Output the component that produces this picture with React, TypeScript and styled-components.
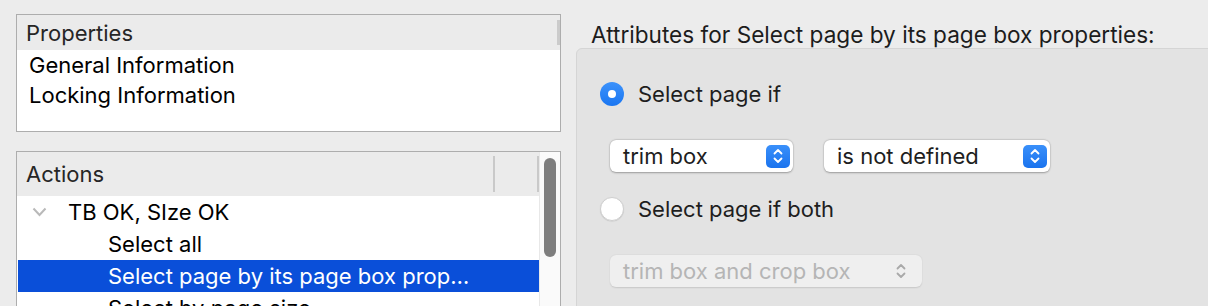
import React from "react";
import styled, { createGlobalStyle } from "styled-components";

const GlobalStyle = createGlobalStyle`
  html, body {
    margin: 0;
    padding: 0;
    background: #ececec;
  }
  body {
    font-family: Inter, "Liberation Sans", sans-serif;
    -webkit-font-smoothing: antialiased;
  }
`;

type Row = { label: string; level: number; expandable?: boolean; selected?: boolean };

const actionRows: Row[] = [
  { label: "TB OK, SIze OK", level: 0, expandable: true },
  { label: "Select all", level: 1 },
  { label: "Select page by its page box prop…", level: 1, selected: true },
  { label: "Select by page size", level: 1 },
];

const Chevron = () => (
  <svg width="15" height="10" viewBox="0 0 15 10">
    <polyline points="1.5,1.5 7.5,8 13.5,1.5" fill="none" stroke="#b9b9b9" strokeWidth="2" />
  </svg>
);

const StepperArrows = ({ color }: { color: string }) => (
  <svg width="10" height="16" viewBox="0 0 10 16">
    <polyline points="1.5,5.5 5,2 8.5,5.5" fill="none" stroke={color} strokeWidth="1.8" strokeLinecap="round" strokeLinejoin="round" />
    <polyline points="1.5,10.5 5,14 8.5,10.5" fill="none" stroke={color} strokeWidth="1.8" strokeLinecap="round" strokeLinejoin="round" />
  </svg>
);

const App: React.FC = () => {
  return (
    <Page>
      <GlobalStyle />
      <LeftColumn>
        <Table $height={118}>
          <Main>
            <Header $height={35}>
              <HeaderCell $width={520}>Properties</HeaderCell>
              <HeaderGrip />
            </Header>
            <PropRow>General Information</PropRow>
            <PropRow>Locking Information</PropRow>
          </Main>
        </Table>
        <Table $height={160}>
          <Main>
            <Header $height={44}>
              <HeaderCell $width={476}>Actions</HeaderCell>
              <Divider />
              <HeaderCell $width={42} />
              <Divider />
            </Header>
            {actionRows.map((row) => (
              <ActionRow key={row.label} $selected={row.selected}>
                <Disclosure>{row.expandable && <Chevron />}</Disclosure>
                <RowLabel $indent={row.level * 40}>{row.label}</RowLabel>
              </ActionRow>
            ))}
          </Main>
          <ScrollTrack>
            <ScrollThumb />
          </ScrollTrack>
        </Table>
      </LeftColumn>

      <RightColumn>
        <Title>Attributes for Select page by its page box properties:</Title>
        <Panel>
          <RadioRow>
            <Radio $checked />
            <RadioLabel>Select page if</RadioLabel>
          </RadioRow>
          <PopupRow>
            <Popup $width={183}>
              <PopupText>trim box</PopupText>
              <Stepper>
                <StepperArrows color="#ffffff" />
              </Stepper>
            </Popup>
            <Popup $width={226}>
              <PopupText>is not defined</PopupText>
              <Stepper>
                <StepperArrows color="#ffffff" />
              </Stepper>
            </Popup>
          </PopupRow>
          <RadioRow>
            <Radio />
            <RadioLabel>Select page if both</RadioLabel>
          </RadioRow>
          <PopupRow>
            <Popup $width={312} $disabled>
              <PopupText>trim box and crop box</PopupText>
              <PlainArrows>
                <StepperArrows color="#a9a9a9" />
              </PlainArrows>
            </Popup>
          </PopupRow>
        </Panel>
      </RightColumn>
    </Page>
  );
};

const Page = styled.div`
  width: 1208px;
  height: 306px;
  overflow: hidden;
  display: flex;
  background: #ececec;
`;

const LeftColumn = styled.div`
  width: 545px;
  margin-left: 16px;
  padding-top: 14px;
  display: flex;
  flex-direction: column;
  gap: 19px;
  flex-shrink: 0;
`;

const Table = styled.div<{ $height: number }>`
  height: ${(p) => p.$height}px;
  flex-shrink: 0;
  box-sizing: border-box;
  border: 1px solid #adadad;
  background: #ffffff;
  display: flex;
  overflow: hidden;
`;

const Main = styled.div`
  flex: 1;
  display: flex;
  flex-direction: column;
`;

const Header = styled.div<{ $height: number }>`
  height: ${(p) => p.$height}px;
  flex-shrink: 0;
  background: #ebebeb;
  display: flex;
  align-items: center;
`;

const HeaderCell = styled.div<{ $width: number }>`
  width: ${(p) => p.$width}px;
  padding-left: 9px;
  box-sizing: border-box;
  font-size: 22px;
  color: #262626;
`;

const HeaderGrip = styled.div`
  width: 3px;
  height: 25px;
  margin-left: auto;
  background: #cbcbcb;
`;

const Divider = styled.div`
  width: 2px;
  height: 36px;
  background: #c9c9c9;
`;

const PropRow = styled.div`
  height: 30px;
  display: flex;
  align-items: center;
  padding-left: 12px;
  font-size: 22px;
  color: #000000;
`;

const ActionRow = styled.div<{ $selected?: boolean }>`
  height: 32px;
  flex-shrink: 0;
  display: flex;
  align-items: center;
  margin-left: 1px;
  background: ${(p) => (p.$selected ? "#0a4fd9" : "transparent")};
  color: ${(p) => (p.$selected ? "#ffffff" : "#000000")};
  font-size: 22px;
  white-space: nowrap;
`;

const Disclosure = styled.div`
  width: 50px;
  padding-left: 14px;
  box-sizing: border-box;
  display: flex;
  align-items: center;
  height: 100%;
`;

const RowLabel = styled.span<{ $indent: number }>`
  padding-left: ${(p) => p.$indent}px;
`;

const ScrollTrack = styled.div`
  width: 21px;
  flex-shrink: 0;
  background: #fafafa;
  border-left: 1px solid #e8e8e8;
  display: flex;
  justify-content: center;
  padding-top: 6px;
  box-sizing: border-box;
`;

const ScrollThumb = styled.div`
  width: 12px;
  height: 99px;
  border-radius: 6px;
  background: #7e7e7e;
`;

const RightColumn = styled.div`
  margin-left: 15px;
  flex: 1;
  display: flex;
  flex-direction: column;
`;

const Title = styled.div`
  height: 48px;
  padding: 22px 0 0 15px;
  box-sizing: border-box;
  font-size: 22.6px;
  line-height: 26px;
  color: #1c1c1c;
  white-space: nowrap;
`;

const Panel = styled.div`
  flex: 1;
  margin-right: -10px;
  background: #e3e3e3;
  border: 1px solid #d5d5d5;
  border-radius: 6px 0 0 0;
  padding: 33px 0 0 23px;
  display: flex;
  flex-direction: column;
`;

const RadioRow = styled.div`
  height: 24px;
  display: flex;
  align-items: center;
  gap: 14px;
`;

const Radio = styled.div<{ $checked?: boolean }>`
  width: 24px;
  height: 24px;
  border-radius: 50%;
  box-sizing: border-box;
  position: relative;
  background: ${(p) => (p.$checked ? "linear-gradient(#3c92fb, #1a76f1)" : "#ffffff")};
  border: ${(p) => (p.$checked ? "none" : "1px solid #cfcfcf")};
  box-shadow: ${(p) => (p.$checked ? "none" : "0 0.5px 1px rgba(0,0,0,0.12)")};

  &::after {
    content: "";
    display: ${(p) => (p.$checked ? "block" : "none")};
    position: absolute;
    left: 8px;
    top: 8px;
    width: 8px;
    height: 8px;
    border-radius: 50%;
    background: #ffffff;
  }
`;

const RadioLabel = styled.span`
  font-size: 22px;
  color: #1e1e1e;
`;

const PopupRow = styled.div`
  display: flex;
  gap: 31px;
  padding-left: 10px;
  margin: 34px 0 25px;
`;

const Popup = styled.div<{ $width: number; $disabled?: boolean }>`
  width: ${(p) => p.$width}px;
  height: 32px;
  box-sizing: border-box;
  border-radius: 6px;
  background: ${(p) => (p.$disabled ? "#efefef" : "#ffffff")};
  box-shadow: ${(p) =>
    p.$disabled
      ? "0 0.5px 1.5px rgba(0,0,0,0.12)"
      : "0 0.5px 2px rgba(0,0,0,0.3), 0 0 0 0.5px rgba(0,0,0,0.06)"};
  display: flex;
  align-items: center;
  padding: 0 3px 0 13px;
  color: ${(p) => (p.$disabled ? "#b5b5b5" : "#1e1e1e")};
`;

const PopupText = styled.span`
  flex: 1;
  font-size: 22px;
  white-space: nowrap;
`;

const Stepper = styled.div`
  width: 24px;
  height: 23px;
  border-radius: 5px;
  background: linear-gradient(#3a90fa, #1a73ee);
  display: flex;
  align-items: center;
  justify-content: center;
`;

const PlainArrows = styled.div`
  width: 24px;
  height: 23px;
  margin-right: 6px;
  display: flex;
  align-items: center;
  justify-content: center;
`;

export default App;
